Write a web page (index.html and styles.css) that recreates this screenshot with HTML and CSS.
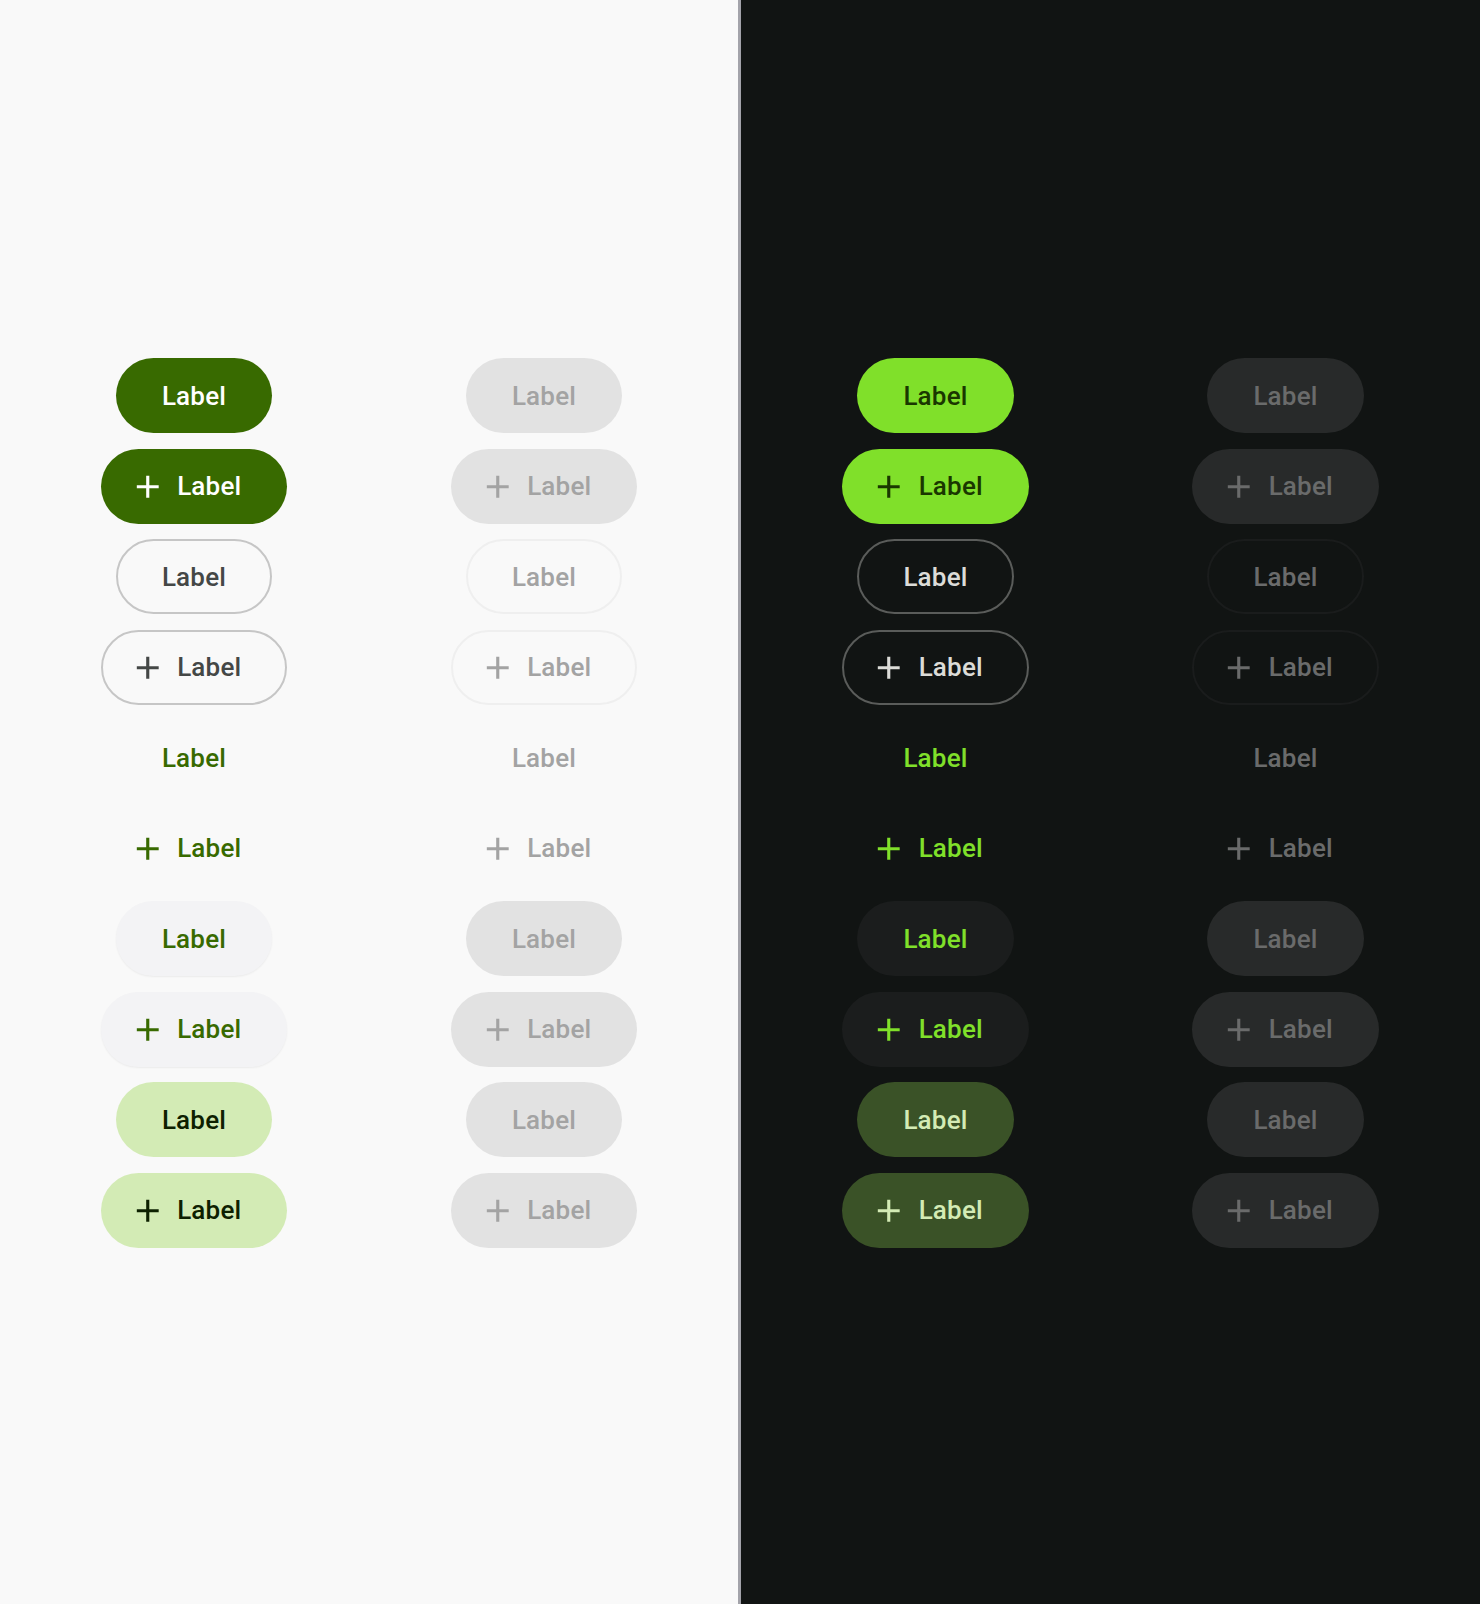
FILE: index.html
```html
<!DOCTYPE html>
<html>
<head>
<meta charset="utf-8">
<link rel="stylesheet" href="styles.css">
</head>
<body>
<div class="page">
  <section class="panel light">
    <div class="grid">
      <div class="cell"><button class="btn filled">Label</button></div>
      <div class="cell"><button class="btn filled dis">Label</button></div>
      <div class="cell"><button class="btn filled icon"><svg viewBox="0 0 24 24"><path d="M19 13h-6v6h-2v-6H5v-2h6V5h2v6h6v2z"/></svg>Label</button></div>
      <div class="cell"><button class="btn filled dis icon"><svg viewBox="0 0 24 24"><path d="M19 13h-6v6h-2v-6H5v-2h6V5h2v6h6v2z"/></svg>Label</button></div>
      <div class="cell"><button class="btn outlined">Label</button></div>
      <div class="cell"><button class="btn outlined dis">Label</button></div>
      <div class="cell"><button class="btn outlined icon"><svg viewBox="0 0 24 24"><path d="M19 13h-6v6h-2v-6H5v-2h6V5h2v6h6v2z"/></svg>Label</button></div>
      <div class="cell"><button class="btn outlined dis icon"><svg viewBox="0 0 24 24"><path d="M19 13h-6v6h-2v-6H5v-2h6V5h2v6h6v2z"/></svg>Label</button></div>
      <div class="cell"><button class="btn textb">Label</button></div>
      <div class="cell"><button class="btn textb dis">Label</button></div>
      <div class="cell"><button class="btn textb icon"><svg viewBox="0 0 24 24"><path d="M19 13h-6v6h-2v-6H5v-2h6V5h2v6h6v2z"/></svg>Label</button></div>
      <div class="cell"><button class="btn textb dis icon"><svg viewBox="0 0 24 24"><path d="M19 13h-6v6h-2v-6H5v-2h6V5h2v6h6v2z"/></svg>Label</button></div>
      <div class="cell"><button class="btn elevated">Label</button></div>
      <div class="cell"><button class="btn elevated dis">Label</button></div>
      <div class="cell"><button class="btn elevated icon"><svg viewBox="0 0 24 24"><path d="M19 13h-6v6h-2v-6H5v-2h6V5h2v6h6v2z"/></svg>Label</button></div>
      <div class="cell"><button class="btn elevated dis icon"><svg viewBox="0 0 24 24"><path d="M19 13h-6v6h-2v-6H5v-2h6V5h2v6h6v2z"/></svg>Label</button></div>
      <div class="cell"><button class="btn tonal">Label</button></div>
      <div class="cell"><button class="btn tonal dis">Label</button></div>
      <div class="cell"><button class="btn tonal icon"><svg viewBox="0 0 24 24"><path d="M19 13h-6v6h-2v-6H5v-2h6V5h2v6h6v2z"/></svg>Label</button></div>
      <div class="cell"><button class="btn tonal dis icon"><svg viewBox="0 0 24 24"><path d="M19 13h-6v6h-2v-6H5v-2h6V5h2v6h6v2z"/></svg>Label</button></div>
    </div>
  </section>
  <div class="divider"></div>
  <section class="panel dark">
    <div class="grid">
      <div class="cell"><button class="btn filled">Label</button></div>
      <div class="cell"><button class="btn filled dis">Label</button></div>
      <div class="cell"><button class="btn filled icon"><svg viewBox="0 0 24 24"><path d="M19 13h-6v6h-2v-6H5v-2h6V5h2v6h6v2z"/></svg>Label</button></div>
      <div class="cell"><button class="btn filled dis icon"><svg viewBox="0 0 24 24"><path d="M19 13h-6v6h-2v-6H5v-2h6V5h2v6h6v2z"/></svg>Label</button></div>
      <div class="cell"><button class="btn outlined">Label</button></div>
      <div class="cell"><button class="btn outlined dis">Label</button></div>
      <div class="cell"><button class="btn outlined icon"><svg viewBox="0 0 24 24"><path d="M19 13h-6v6h-2v-6H5v-2h6V5h2v6h6v2z"/></svg>Label</button></div>
      <div class="cell"><button class="btn outlined dis icon"><svg viewBox="0 0 24 24"><path d="M19 13h-6v6h-2v-6H5v-2h6V5h2v6h6v2z"/></svg>Label</button></div>
      <div class="cell"><button class="btn textb">Label</button></div>
      <div class="cell"><button class="btn textb dis">Label</button></div>
      <div class="cell"><button class="btn textb icon"><svg viewBox="0 0 24 24"><path d="M19 13h-6v6h-2v-6H5v-2h6V5h2v6h6v2z"/></svg>Label</button></div>
      <div class="cell"><button class="btn textb dis icon"><svg viewBox="0 0 24 24"><path d="M19 13h-6v6h-2v-6H5v-2h6V5h2v6h6v2z"/></svg>Label</button></div>
      <div class="cell"><button class="btn elevated">Label</button></div>
      <div class="cell"><button class="btn elevated dis">Label</button></div>
      <div class="cell"><button class="btn elevated icon"><svg viewBox="0 0 24 24"><path d="M19 13h-6v6h-2v-6H5v-2h6V5h2v6h6v2z"/></svg>Label</button></div>
      <div class="cell"><button class="btn elevated dis icon"><svg viewBox="0 0 24 24"><path d="M19 13h-6v6h-2v-6H5v-2h6V5h2v6h6v2z"/></svg>Label</button></div>
      <div class="cell"><button class="btn tonal">Label</button></div>
      <div class="cell"><button class="btn tonal dis">Label</button></div>
      <div class="cell"><button class="btn tonal icon"><svg viewBox="0 0 24 24"><path d="M19 13h-6v6h-2v-6H5v-2h6V5h2v6h6v2z"/></svg>Label</button></div>
      <div class="cell"><button class="btn tonal dis icon"><svg viewBox="0 0 24 24"><path d="M19 13h-6v6h-2v-6H5v-2h6V5h2v6h6v2z"/></svg>Label</button></div>
    </div>
  </section>
</div>
</body>
</html>
```
FILE: styles.css
```css
html, body {
  margin: 0;
  padding: 0;
}
body {
  font-family: Roboto, "Noto Sans", sans-serif;
}
.page {
  display: flex;
  width: 1480px;
  height: 1604px;
}
.panel {
  display: flex;
  align-items: center;
  justify-content: center;
  padding-top: 2px;
  box-sizing: border-box;
}
.light {
  width: 738px;
  background: #f9f9f9;
}
.dark {
  width: 739px;
  background: #111413;
}
.divider {
  width: 3px;
  background: #a3a3aa;
}
.grid {
  display: grid;
  grid-template-columns: 350px 350px;
  grid-auto-rows: 75px;
  row-gap: 15.5px;
}
.cell {
  display: flex;
  align-items: center;
  justify-content: center;
}
.btn {
  box-sizing: border-box;
  height: 75px;
  display: flex;
  align-items: center;
  justify-content: center;
  padding: 0 46px;
  border: none;
  border-radius: 40px;
  font-family: Roboto, sans-serif;
  font-weight: 500;
  font-size: 26px;
  letter-spacing: 0.2px;
  background: transparent;
}
.btn.icon {
  padding-left: 28px;
  gap: 11px;
}
.btn.outlined {
  padding: 0 44px;
}
.btn.outlined.icon {
  padding-left: 26px;
}
.btn svg {
  width: 37.5px;
  height: 37.5px;
  fill: currentColor;
  flex: none;
}

/* light theme */
.light .filled { background: #386a00; color: #ffffff; }
.light .outlined { border: 2px solid #c6c6c6; color: #444746; }
.light .textb { color: #386a00; }
.light .elevated { background: #f3f3f5; color: #386a00; box-shadow: 0 1px 2px rgba(0,0,0,0.06); }
.light .tonal { background: #d3ebb5; color: #0d2000; }
.light .dis { background: #e2e2e2; color: #a3a3a3; box-shadow: none; }
.light .outlined.dis { background: transparent; border-color: #efefef; }
.light .textb.dis { background: transparent; }

/* dark theme */
.dark .filled { background: #80e02a; color: #1a3700; }
.dark .outlined { border: 2px solid #5a5c5a; color: #dcdcd8; }
.dark .textb { color: #80e02a; }
.dark .elevated { background: #1b1d1d; color: #80e02a; }
.dark .tonal { background: #3a5227; color: #d3ebb5; }
.dark .dis { background: #282a2a; color: #6a6b6b; }
.dark .outlined.dis { background: transparent; border-color: #1a1c1c; }
.dark .textb.dis { background: transparent; }
```
